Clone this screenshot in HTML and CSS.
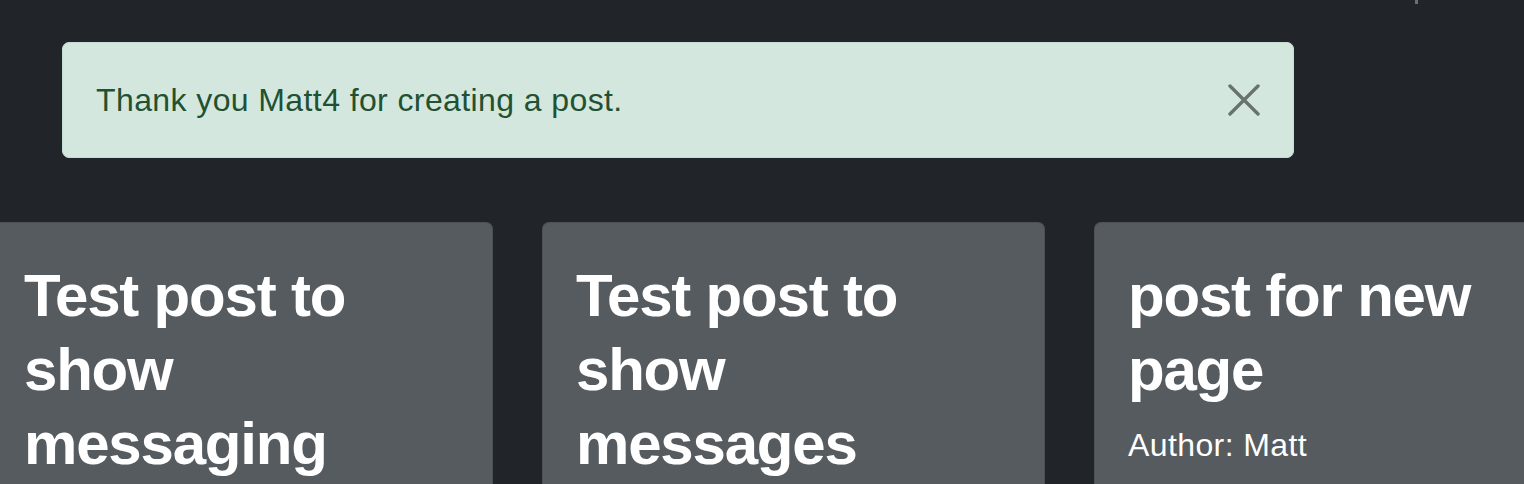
FILE: index.html
```html
<!DOCTYPE html>
<html>
<head>
<meta charset="utf-8">
<link rel="stylesheet" href="styles.css">
</head>
<body>
<div class="nav-stub"><span class="nav-mark"></span></div>
<div class="alert">
  <span class="alert-text">Thank you Matt4 for creating a post.</span>
  <button class="close" aria-label="Close">
    <svg width="32" height="32" viewBox="0 0 32 32"><path d="M2 2L30 30M30 2L2 30" stroke="#69736e" stroke-width="3.4" stroke-linecap="round" fill="none"/></svg>
  </button>
</div>
<div class="cards">
  <div class="card"><h1 class="title">Test post to show messaging</h1></div>
  <div class="card"><h1 class="title">Test post to show messages</h1></div>
  <div class="card"><h1 class="title">post for new page</h1><p class="author">Author: Matt</p></div>
</div>
</body>
</html>
```
FILE: styles.css
```css
html, body {
  margin: 0;
  padding: 0;
  background: #212529;
  overflow: hidden;
  height: 484px;
  font-family: "Liberation Sans", Arial, sans-serif;
}
.nav-stub {
  height: 0;
  position: relative;
}
.nav-mark {
  position: absolute;
  left: 1415px;
  top: 0;
  width: 3px;
  height: 4px;
  background: #6c7075;
}
.alert {
  box-sizing: border-box;
  margin: 42px 0 0 62px;
  width: 1232px;
  height: 116px;
  background: #d4e7de;
  border: 1px solid #c6ddd1;
  border-radius: 7px;
  display: flex;
  align-items: center;
  justify-content: space-between;
  padding: 0 33px 0 33px;
  color: #1f5132;
}
.alert-text {
  font-size: 32px;
  line-height: 48px;
  letter-spacing: 0.4px;
}
.close {
  background: none;
  border: 0;
  padding: 0;
  width: 32px;
  height: 32px;
  display: flex;
  align-items: center;
  justify-content: center;
}
.cards {
  display: flex;
  gap: 49px;
  margin: 64px 0 0 -10px;
}
.card {
  flex: 0 0 503px;
  box-sizing: border-box;
  background: #565b60;
  border: 1px solid #4c5156;
  border-bottom: 0;
  border-radius: 7px 7px 0 0;
  padding: 36px 33px 0 33px;
  height: 262px;
  overflow: hidden;
  color: #fff;
}
.title {
  margin: 0;
  font-size: 60px;
  line-height: 74px;
  font-weight: 700;
  letter-spacing: -1.2px;
}
.author {
  margin: 14px 0 0 0;
  font-size: 32px;
  line-height: 48px;
  letter-spacing: 0.4px;
}
```
